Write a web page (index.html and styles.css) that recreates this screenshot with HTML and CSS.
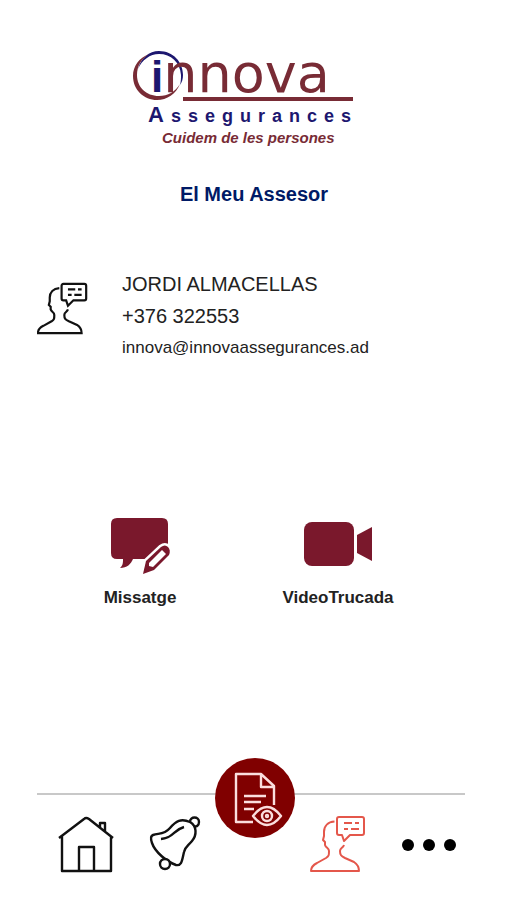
FILE: index.html
```html
<!DOCTYPE html>
<html lang="ca">
<head>
    <meta charset="UTF-8">
    <meta name="viewport" content="width=device-width, initial-scale=1.0">
    <title>Innova Assegurances • El Meu Assesor</title>
    <link rel="stylesheet" href="styles.css">
</head>
<body>
    <svg class="sprite" aria-hidden="true">
        <symbol id="advisor" viewBox="0 0 56 57">
            <path d="M24.5 5.5C18 6 14 10 14 16v4l-1 4 2 2v3c1 3 4 3 4 6 0 4 0 5-3 7L7 47c-4 2-6 4-6 8h48c0-4-2-7-5-9l-9-4c-4-2-5-3-5-7 0-3 3-3 4-6"/>
            <path d="M29 1h23q2 0 2 2v14q0 2-2 2H40l-6 6-2-6h-3q-2 0-2-2V3q0-2 2-2z"/>
            <path d="M34 7h8M45 7h4M34 13h4M41 13h8"/>
        </symbol>
    </svg>

    <header>
        <svg class="logo" viewBox="0 0 228 98" role="img" aria-label="Innova Assegurances">
            <path class="navy" d="M5 19C8 8 16 1 26 1c14 0 24 11 24 24 0 4-1 7-3 10 1-4 1-7 1-10C47 12 38 4 26 4 17 4 9 10 5 19z"/>
            <path class="wine" d="M16 4C6 8 0 16 0 26c0 14 11 24 24 24 10 0 19-6 23-16-5 8-12 12-21 12C13 46 4 37 4 25 4 16 8 9 16 4z"/>
            <text class="brand" x="18" y="42"><tspan class="navy initial">i</tspan><tspan class="wine">nnova</tspan></text>
            <path class="wine" d="M50 47h170v4H50z"/>
            <text class="company navy" x="15" y="72"><tspan class="capital">A</tspan>ssegurances</text>
            <text class="tagline wine" x="29" y="93">Cuidem de les persones</text>
        </svg>
        <h1>El Meu Assesor</h1>
    </header>

    <main>
        <section class="contact">
            <svg class="contact-icon"><use href="#advisor"/></svg>
            <div class="contact-data">
                <p>JORDI ALMACELLAS</p>
                <a href="tel:+376322553">+376 322553</a>
                <a class="mail" href="mailto:innova@innovaassegurances.ad">innova@innovaassegurances.ad</a>
            </div>
        </section>

        <section class="actions">
            <button type="button">
                <svg width="58" height="58" viewBox="0 0 58 58">
                    <path d="M6 1h45q6 0 6 6v29q0 6-6 6H22c-2 5-6 9-13 9 3-3 3-5 3-9H6q-6 0-6-6V7q0-6 6-6z"/>
                    <path class="pencil-gap" d="M32 57l3-13 15-14q4-3 7 0t1 8L43 53z"/>
                    <path d="M32 57l3-13 15-14q4-3 7 0t1 8L43 53z"/>
                    <path class="pencil-hole" d="M38 46l13-13 4 4-13 13-4-1z"/>
                </svg>
                <span>Missatge</span>
            </button>
            <button type="button">
                <svg width="68" height="58" viewBox="0 0 68 58">
                    <rect y="5" width="50" height="44" rx="8"/>
                    <path d="M53 18l15-8v34l-15-8z"/>
                </svg>
                <span>VideoTrucada</span>
            </button>
        </section>
    </main>

    <nav>
        <div class="nav-group">
            <a href="#inici" aria-label="Inici">
                <svg width="56" height="57" viewBox="0 0 56 57">
                    <path d="M1 22L26 3q2-2 5 0l24 19M4 20v35h49V20M21 55V31h15v24M42 12V7h5v9"/>
                </svg>
            </a>
            <a href="#avisos" aria-label="Avisos">
                <svg width="50" height="57" viewBox="0 0 50 57">
                    <path d="M3 19c6-2 11 0 17-7S31 2 40 6c7 4 7 13 2 19-4 5-7 6-8 11-2 8-2 14-8 13C17 46 5 36 2 27c-1-3-2-7 1-8z"/>
                    <path d="M11 23c13-1 12-9 23-12"/>
                    <path d="M40 6c0-6 9-6 9 0 0 4-3 5-5 4"/>
                    <circle class="clapper" cx="15" cy="48" r="5"/>
                </svg>
            </a>
        </div>
        <a class="policies" href="#polisses" aria-label="Pòlisses">
            <svg width="80" height="80" viewBox="0 0 80 80">
                <path d="M59 47V28L46 16H21v48h17M46 16v13h13M29 38h22M29 44h17M29 51h10"/>
                <path d="M38 58q14-18 28 0-14 18-28 0z"/>
                <circle cx="52" cy="58" r="5"/>
                <circle cx="52" cy="58" r="1"/>
            </svg>
        </a>
        <div class="nav-group">
            <a class="active" href="#assessor" aria-label="El Meu Assesor">
                <svg width="56" height="57"><use href="#advisor"/></svg>
            </a>
            <a class="more" href="#mes" aria-label="Més">
                <svg width="54" height="57" viewBox="0 0 54 57">
                    <circle cx="6" cy="29" r="6"/>
                    <circle cx="27" cy="29" r="6"/>
                    <circle cx="48" cy="29" r="6"/>
                </svg>
            </a>
        </div>
    </nav>
</body>
</html>
```
FILE: styles.css
```css
:root {
    --navy: #1d176f;
    --title: #001a66;
    --wine: #782b35;
    --action: #7a182c;
    --policies: #800000;
    --active: #e4574b;
    --text: #222;
}

* {
    box-sizing: border-box;
}

body {
    margin: 0;
    min-height: 100vh;
    padding: 50px 42px 27px 37px;
    display: flex;
    flex-direction: column;
    background: #fff;
    color: var(--text);
    font-family: "Liberation Sans", Arial, sans-serif;
}

a {
    color: inherit;
    text-decoration: none;
}

svg {
    display: block;
}

.sprite {
    position: absolute;
    width: 0;
    height: 0;
}

/* Header */
header {
    display: flex;
    flex-direction: column;
    align-items: center;
    gap: 34px;
}

.logo {
    width: 228px;
    height: 98px;
    margin-right: 8px;
    overflow: visible;
}

.navy {
    fill: var(--navy);
}

.wine {
    fill: var(--wine);
}

.brand {
    font-family: "DejaVu Sans", Verdana, sans-serif;
    font-size: 54px;
}

.initial {
    font-family: "Liberation Sans", Arial, sans-serif;
    font-size: 44px;
    font-weight: bold;
}

.company {
    font-size: 18px;
    font-weight: bold;
    letter-spacing: 7px;
}

.capital {
    font-size: 22px;
}

.tagline {
    font-size: 15px;
    font-style: italic;
    font-weight: bold;
}

h1 {
    margin: 0;
    padding-left: 6px;
    color: var(--title);
    font-size: 20px;
    line-height: 24px;
}

/* Contact */
.contact {
    display: flex;
    align-items: flex-start;
    gap: 34px;
    margin-top: 62px;
}

.contact-icon {
    width: 51px;
    height: 54px;
    margin-top: 14px;
    fill: none;
    stroke: #111;
    stroke-width: 2.4;
}

.contact-data {
    display: flex;
    flex-direction: column;
    font-size: 20px;
    line-height: 32px;
}

.contact-data p {
    margin: 0;
}

.contact-data .mail {
    font-size: 17px;
}

/* Actions */
.actions {
    display: grid;
    grid-template-columns: 1fr 1fr;
    margin-top: 153px;
    padding: 0 28px 0 4px;
}

.actions button {
    display: flex;
    flex-direction: column;
    align-items: center;
    gap: 12px;
    padding: 0;
    border: 0;
    background: none;
    color: var(--text);
    font: bold 17px/22px "Liberation Sans", Arial, sans-serif;
    cursor: pointer;
}

.actions svg {
    overflow: visible;
    fill: var(--action);
}

.actions .pencil-gap {
    fill: #fff;
    stroke: #fff;
    stroke-width: 5;
}

.actions .pencil-hole {
    fill: #fff;
}

/* Bottom navigation */
nav {
    display: flex;
    justify-content: center;
    gap: 15px;
    margin-top: auto;
    padding-left: 12px;
    border-top: 2px solid #c8c8c8;
}

.nav-group {
    display: flex;
    gap: 36px;
    padding-top: 21px;
}

nav svg {
    overflow: visible;
    fill: none;
    stroke: #111;
    stroke-width: 2.4;
    stroke-linejoin: round;
}

nav .clapper {
    fill: #fff;
}

nav .active svg {
    stroke: var(--active);
    stroke-width: 2;
}

nav .more svg {
    fill: #000;
    stroke: none;
}

.policies {
    width: 80px;
    height: 80px;
    margin-top: -37px;
    border-radius: 50%;
    background: var(--policies);
}

.policies svg {
    stroke: #fbdede;
}
```
